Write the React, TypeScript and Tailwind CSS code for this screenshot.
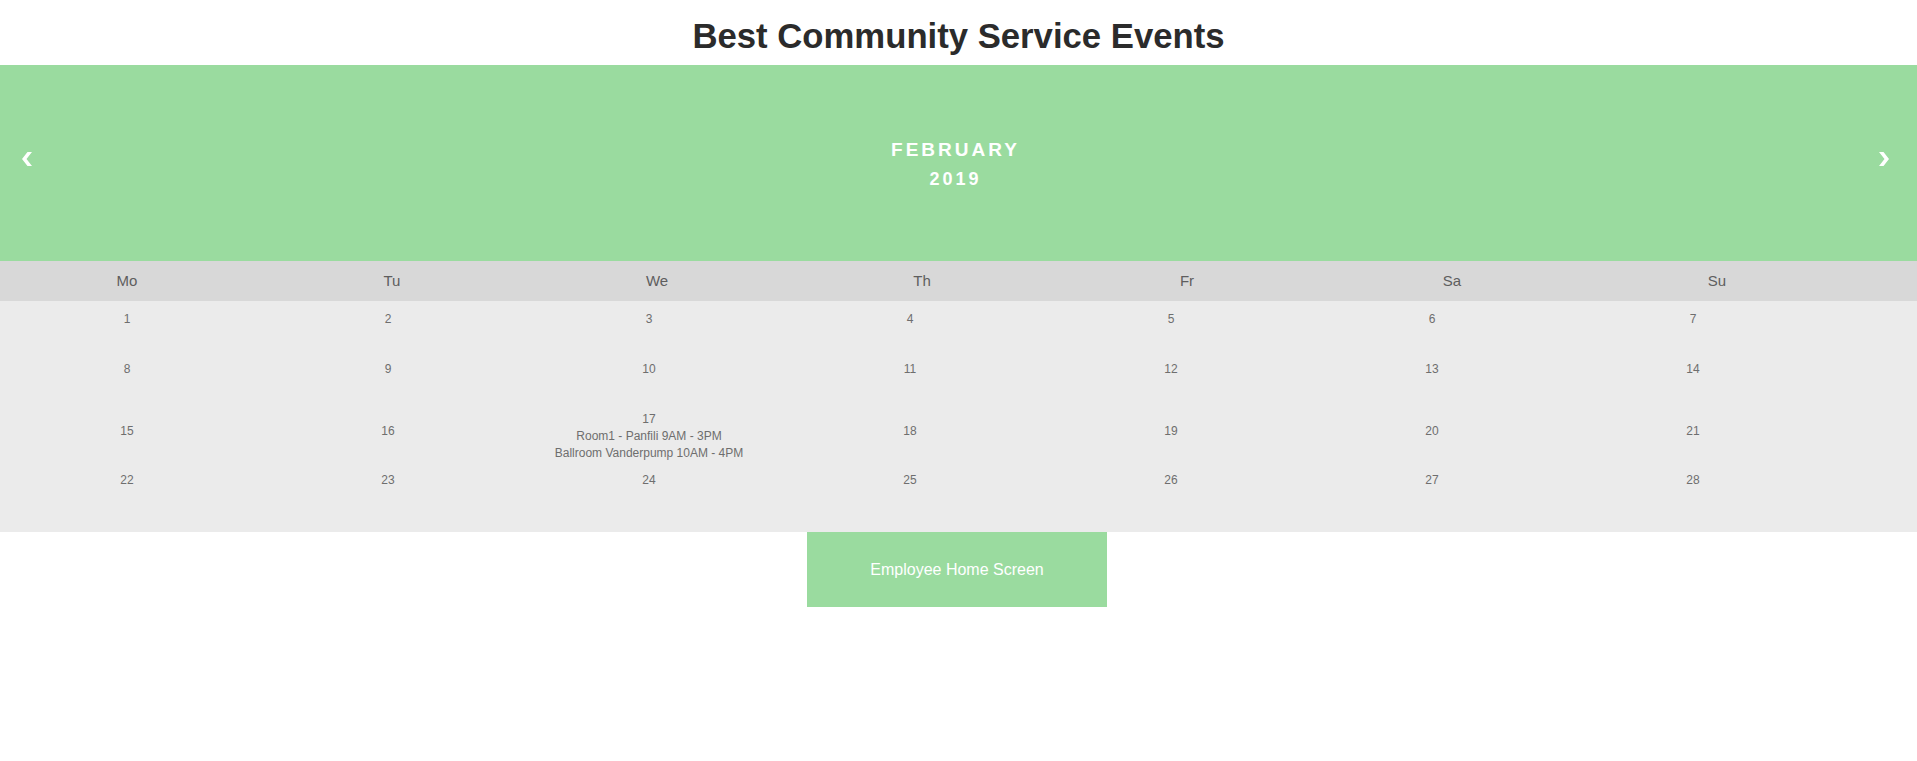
import React from 'react';

interface CalendarEvent {
  title: string;
}

interface Day {
  day: number;
  events: CalendarEvent[];
}

const weekdays = ['Mo', 'Tu', 'We', 'Th', 'Fr', 'Sa', 'Su'];

const eventsByDay: Record<number, CalendarEvent[]> = {
  17: [{ title: 'Room1 - Panfili 9AM - 3PM' }, { title: 'Ballroom Vanderpump 10AM - 4PM' }],
};

const weeks: Day[][] = [0, 1, 2, 3].map((w) =>
  Array.from({ length: 7 }, (_, i) => {
    const day = w * 7 + i + 1;
    return { day, events: eventsByDay[day] || [] };
  })
);

const Chevron: React.FC<{ dir: 'left' | 'right' }> = ({ dir }) => (
  <svg width="10" height="14" viewBox="0 0 10 14" className="mb-[9px]">
    {dir === 'left' ? (
      <polygon points="5.5,0 10,0 4.5,7 10,14 5.5,14 0,7" fill="#ffffff" />
    ) : (
      <polygon points="0,0 4.5,0 10,7 4.5,14 0,14 5.5,7" fill="#ffffff" />
    )}
  </svg>
);

const App: React.FC = () => {
  return (
    <div className="min-h-screen bg-white font-['Liberation_Sans',Arial,sans-serif]">
      <div className="h-[65px] flex items-center justify-center pt-[8px]">
        <h1 className="text-[34.7px] font-bold text-[#2b2b2b] leading-none">Best Community Service Events</h1>
      </div>

      <div className="h-[196px] bg-[#9adb9f] flex items-center justify-between pl-[22px] pr-[28px]">
        <Chevron dir="left" />
        <div className="flex flex-col items-center text-white font-bold tracking-[3px] pt-[2px]">
          <div className="text-[19px] leading-[29px]">FEBRUARY</div>
          <div className="text-[18px] leading-[30px]">2019</div>
        </div>
        <Chevron dir="right" />
      </div>

      <div className="h-[40px] bg-[#d8d8d8] flex gap-[11px] items-center">
        {weekdays.map((d) => (
          <div key={d} className="w-[254px] shrink-0 text-center text-[15px] text-[#5e5e5e]">
            {d}
          </div>
        ))}
      </div>

      <div className="bg-[#ebebeb] pb-[20px]">
        {weeks.map((week, wi) => {
          const rowHasEvents = week.some((d) => d.events.length > 0);
          return (
            <div key={wi} className="flex gap-[7px] min-h-[50px]">
              {week.map((d) => (
                <div
                  key={d.day}
                  className={
                    'w-[254px] shrink-0 flex flex-col items-center text-[12px] leading-[17px] text-[#6e6e6e] ' +
                    (rowHasEvents && d.events.length === 0 ? 'justify-center' : 'pt-[10px]')
                  }
                >
                  <span>{d.day}</span>
                  {d.events.map((e) => (
                    <span key={e.title} className="whitespace-nowrap">
                      {e.title}
                    </span>
                  ))}
                </div>
              ))}
            </div>
          );
        })}
      </div>

      <div className="flex justify-center pr-[3px]">
        <button className="w-[300px] h-[75px] bg-[#9adb9f] text-white text-[16px]">Employee Home Screen</button>
      </div>
    </div>
  );
};

export default App;
